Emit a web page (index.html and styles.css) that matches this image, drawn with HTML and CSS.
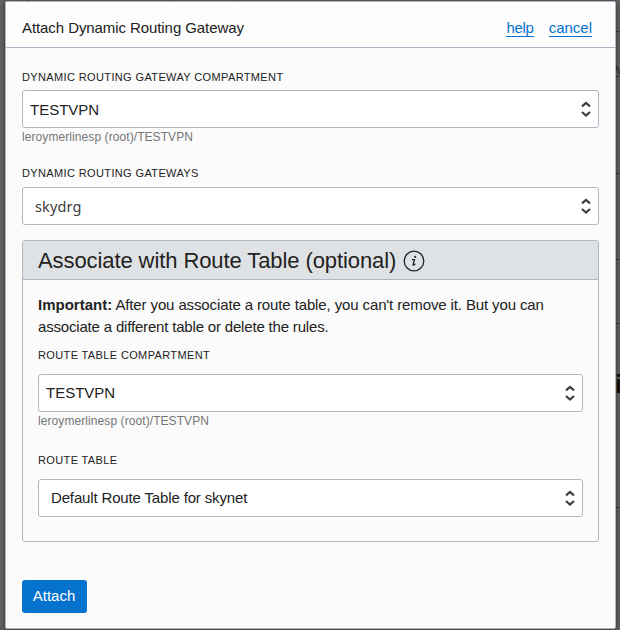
FILE: index.html
```
<!DOCTYPE html>
<html lang="en">
<head>
<meta charset="utf-8">
<title>Attach Dynamic Routing Gateway</title>
<link rel="stylesheet" href="styles.css">
</head>
<body>
<svg width="0" height="0" class="defs">
  <symbol id="chevrons" viewBox="0 0 12 18">
    <path d="M2 6.4 6 2.9 10 6.4M2 12 6 15.5 10 12" fill="none" stroke="#3c3c3c" stroke-width="2.1"/>
  </symbol>
</svg>
<div class="edge" aria-hidden="true">
  <i class="rule r1"></i><i class="rule r2"></i><i class="rule r3"></i><i class="rule r4"></i><i class="rule r5"></i><i class="rule r6"></i>
  <span class="letter w">w</span><span class="letter i">i</span>
  <i class="tick t1"></i><i class="tick t2"></i><i class="tick t3"></i>
</div>
<main class="dialog">
  <header class="dialog-header">
    <h1>Attach Dynamic Routing Gateway</h1>
    <nav><a class="help" href="#">help</a><a href="#">cancel</a></nav>
  </header>
  <form class="dialog-body">
    <label class="label">DYNAMIC ROUTING GATEWAY COMPARTMENT</label>
    <div class="select first"><span>TESTVPN</span><svg class="chev"><use href="#chevrons"/></svg></div>
    <p class="hint">leroymerlinesp (root)/TESTVPN</p>
    <label class="label gateways">DYNAMIC ROUTING GATEWAYS</label>
    <div class="select native"><span class="sky">skydrg</span><svg class="chev"><use href="#chevrons"/></svg></div>
    <section class="panel">
      <h2>Associate with Route Table (optional)
        <svg class="info" viewBox="0 0 22 22"><circle cx="11" cy="11" r="9.8" fill="none" stroke="#222" stroke-width="1.3"/><circle cx="12.2" cy="6.8" r="1.1" fill="#222"/><path d="M8.9 9.7h2.6L10.1 14.4q-.3 1.1.7.6l1.6-1.3" fill="none" stroke="#222" stroke-width="1.3"/></svg>
      </h2>
      <div class="panel-body">
        <p class="note"><b>Important:</b> After you associate a route table, you can't remove it. But you can <span class="second">associate a different table or delete the rules.</span></p>
        <label class="label inner">ROUTE TABLE COMPARTMENT</label>
        <div class="select"><span>TESTVPN</span><svg class="chev"><use href="#chevrons"/></svg></div>
        <p class="hint">leroymerlinesp (root)/TESTVPN</p>
        <label class="label table">ROUTE TABLE</label>
        <div class="select native"><span class="value">Default Route Table for skynet</span><svg class="chev"><use href="#chevrons"/></svg></div>
      </div>
    </section>
    <button class="attach" type="button">Attach</button>
  </form>
</main>
</body>
</html>
```
FILE: styles.css
```
* { box-sizing: border-box; }
body {
  margin: 0;
  width: 620px;
  height: 630px;
  padding: 1px 4px 1px 5px;
  overflow: hidden;
  position: relative;
  background: #636363;
  color: #222;
  font: 15px/22px "Liberation Sans", Arial, sans-serif;
}
h1, h2, p { margin: 0; font-weight: 400; }
.defs { position: absolute; }

/* page behind the dialog */
.edge { position: absolute; inset: 0; }
.rule { position: absolute; left: 616px; width: 4px; height: 1px; background: #383a3c; }
.r1 { top: 31px; }
.r2 { top: 76px; }
.r3 { top: 173px; }
.r4 { top: 259px; }
.r5 { top: 323px; }
.r6 { top: 507px; }
.tick { position: absolute; top: 0; width: 1px; height: 1px; background: #333; }
.t1 { left: 27px; }
.t2 { left: 173px; }
.t3 { left: 234px; }
.letter { position: absolute; color: #111; }
.letter.w { left: 612px; top: 58px; font-size: 14px; color: #303438; }
.letter.i { left: 615px; top: 373px; font-size: 26px; font-weight: 700; }

.dialog {
  position: relative;
  width: 611px;
  height: 628px;
  border: 1px solid #b0b6c1;
  border-radius: 2px;
  background: #fbfbfb;
  box-shadow: 0 1px 5px rgba(0, 0, 0, .55);
}
.dialog-header {
  display: flex;
  align-items: center;
  justify-content: space-between;
  height: 46px;
  padding: 7px 23px 0 16px;
  border-bottom: 1px solid #b0b6c6;
  background: #fdfdfd;
}
h1 { font-size: 15px; letter-spacing: -.08px; }
nav { display: flex; gap: 15px; }
nav a {
  color: #0572ce;
  line-height: 16px;
  text-decoration: none;
  border-bottom: 1px solid #0572ce;
}
nav .help { letter-spacing: -.3px; }
.dialog-body { padding: 21px 16px 0; }
.label { display: block; font-size: 11px; line-height: 16px; height: 16px; letter-spacing: .37px; }
.select {
  display: flex;
  align-items: center;
  justify-content: space-between;
  height: 38px;
  margin-top: 5px;
  padding: 0 6px 0 7px;
  border: 1px solid #b0b6c1;
  border-radius: 3px;
  background: #fff;
}
.select.first > span { padding-top: 2px; }
.select.native { padding-left: 12px; }
.value { letter-spacing: -.15px; }
.chev { width: 12px; height: 18px; }
.hint { font-size: 12px; line-height: 18px; height: 18px; color: #767676; letter-spacing: .08px; }
.gateways { margin-top: 19px; }
.gateways + .select { margin-top: 6px; }
.sky { font-family: "Noto Sans", sans-serif; font-size: 14.5px; letter-spacing: .15px; color: #3c3c3c; }
.panel {
  height: 302px;
  margin-top: 15px;
  border: 1px solid #b0b6c1;
  border-radius: 3px;
}
.panel h2 {
  display: flex;
  align-items: center;
  gap: 7px;
  height: 39px;
  padding: 2px 0 0 15px;
  border-bottom: 1px solid #b0b6c1;
  border-radius: 2px 2px 0 0;
  background: #dfe2e4;
  font-size: 22px;
  line-height: 36px;
  letter-spacing: -.09px;
}
.info { width: 22px; height: 22px; }
.panel-body { padding: 14px 15px 0; }
.note { height: 44px; letter-spacing: -.12px; }
.note b { letter-spacing: 0; }
.note .second { letter-spacing: -.18px; }
.inner { margin-top: 9px; }
.panel .select { margin-top: 11px; }
.panel .hint { height: 18px; }
.table { margin-top: 22px; }
.attach {
  display: block;
  width: 65px;
  height: 33px;
  margin-top: 38px;
  padding: 0 1px 2px 0;
  border: 0;
  border-radius: 3px;
  background: #0572ce;
  color: #fff;
  font: 15px/31px "Liberation Sans", Arial, sans-serif;
}
```
